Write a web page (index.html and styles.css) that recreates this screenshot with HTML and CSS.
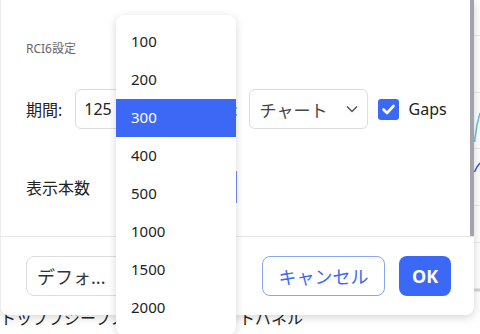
FILE: index.html
```html
<!DOCTYPE html>
<html lang="ja">
<head>
  <meta charset="UTF-8">
  <meta name="viewport" content="width=device-width, initial-scale=1.0">
  <title>RCI6設定</title>
  <link rel="stylesheet" href="styles.css">
</head>
<body>
  <div class="page">
    <svg class="chart" width="6" height="334" viewBox="474 0 6 334">
      <line x1="474" y1="35.5" x2="480" y2="35.5" stroke="#ececec"/>
      <line x1="474" y1="92.5" x2="480" y2="92.5" stroke="#ececec"/>
      <line x1="474" y1="148.5" x2="480" y2="148.5" stroke="#ececec"/>
      <line x1="474" y1="205.5" x2="480" y2="205.5" stroke="#ececec"/>
      <line x1="474" y1="242.5" x2="480" y2="242.5" stroke="#ececec"/>
      <line x1="474" y1="290" x2="480" y2="290" stroke="#d4d4d8" stroke-width="3"/>
      <polyline points="474.5,142 477,125 480,113" fill="none" stroke="#5cc6d6" stroke-width="1.5"/>
      <polyline points="474.5,172 477,167 480,163" fill="none" stroke="#2f5ff0" stroke-width="1.5"/>
    </svg>
    <p class="page-text"><span>トップブジーブス</span><span class="page-text-end">トパネル</span></p>
  </div>

  <div class="dialog">
    <div class="dialog-body">
      <div class="content">
        <div class="section-title">RCI6設定</div>
        <div class="row">
          <span class="label">期間:</span>
          <div class="field field-period">125</div>
          <span class="label label-type">種類:</span>
          <div class="field field-select">
            <span>チャート</span>
            <svg width="12" height="8" viewBox="0 0 12 8"><polyline points="1,1.5 6,6.5 11,1.5" fill="none" stroke="#555" stroke-width="1.5"/></svg>
          </div>
          <span class="checkbox">
            <svg width="21" height="21" viewBox="0 0 21 21"><polyline points="5.5,10.5 9,14 15.5,7" fill="none" stroke="#fff" stroke-width="2.6" stroke-linecap="round" stroke-linejoin="round"/></svg>
          </span>
          <span class="check-label">Gaps</span>
        </div>
        <div class="row row-count">
          <span class="label">表示本数</span>
          <div class="count-box"></div>
        </div>
      </div>
      <div class="scrollbar"></div>
    </div>
    <div class="dialog-footer">
      <button class="btn btn-default">デフォ...</button>
      <span class="spacer"></span>
      <button class="btn btn-cancel">キャンセル</button>
      <button class="btn btn-ok">OK</button>
    </div>
  </div>

  <ul class="dropdown">
    <li>100</li>
    <li>200</li>
    <li class="selected">300</li>
    <li>400</li>
    <li>500</li>
    <li>1000</li>
    <li>1500</li>
    <li>2000</li>
  </ul>
</body>
</html>
```

FILE: styles.css
```css
body {
  margin: 0;
  width: 480px;
  height: 334px;
  overflow: hidden;
  position: relative;
  background: #fff;
  font-family: "Noto Sans", "Noto Sans CJK JP", sans-serif;
  color: #222;
}
.page {
  padding-top: 308px;
}
.chart {
  position: absolute;
  left: 474px;
  top: 0;
}
.page-text {
  margin: 0;
  font-size: 16px;
  line-height: 20px;
  white-space: nowrap;
  color: #222;
}
.page-text-end {
  margin-left: 112px;
}

.dialog {
  position: absolute;
  left: 0;
  top: 0;
  width: 474px;
  height: 315px;
  display: flex;
  flex-direction: column;
  background: #fff;
  border-radius: 0 0 8px 8px;
  box-shadow: 0 2px 10px rgba(0,0,0,0.18);
  border-left: 1px solid #ececec;
  box-sizing: border-box;
}
.dialog-body {
  height: 236px;
  display: flex;
}
.content {
  flex: 1;
  padding: 41px 0 0 25px;
}
.scrollbar {
  width: 4px;
  background: #a3a3ab;
}
.section-title {
  font-size: 12px;
  line-height: 16px;
  color: #666;
}
.row {
  display: flex;
  align-items: center;
  height: 40px;
  margin-top: 32px;
}
.row-count {
  height: 32px;
  margin-top: 42px;
}
.label {
  font-size: 16px;
  white-space: nowrap;
}
.field {
  height: 40px;
  box-sizing: border-box;
  border: 1px solid #dcdcdc;
  border-radius: 6px;
  display: flex;
  align-items: center;
  font-size: 16px;
}
.field-period {
  width: 114px;
  margin-left: 13px;
  padding-left: 8px;
}
.label-type {
  margin-left: 12px;
}
.field-select {
  width: 119px;
  margin-left: 11px;
  padding: 0 9px 0 10px;
  justify-content: space-between;
  color: #444;
  font-size: 17px;
}
.checkbox {
  width: 21px;
  height: 21px;
  margin-left: 10px;
  background: #3b68f6;
  border-radius: 3px;
  display: flex;
}
.check-label {
  margin-left: 10px;
  font-size: 16px;
}
.count-box {
  width: 89px;
  height: 32px;
  margin-left: 58px;
  box-sizing: border-box;
  border: 2px solid #6f8ff6;
}

.dialog-footer {
  flex: 1;
  display: flex;
  align-items: center;
  padding: 0 23px 0 25px;
  border-top: 1px solid #e6e6e6;
}
.spacer {
  flex: 1;
}
.btn {
  height: 40px;
  border-radius: 8px;
  font-family: inherit;
  font-size: 18px;
  background: #fff;
  padding: 0;
  cursor: pointer;
}
.btn-default {
  width: 104px;
  border: 1px solid #dcdcdc;
  color: #333;
  text-align: left;
  padding-left: 10px;
}
.btn-cancel {
  width: 123px;
  border: 1px solid #86a4f8;
  color: #3d6af5;
}
.btn-ok {
  width: 52px;
  margin-left: 14px;
  border: none;
  background: #3b68f6;
  color: #fff;
  font-weight: bold;
}

.dropdown {
  position: absolute;
  left: 116px;
  top: 15px;
  width: 120px;
  margin: 0;
  padding: 8px 0;
  list-style: none;
  background: #fff;
  border-radius: 8px;
  box-shadow: 0 2px 8px rgba(0,0,0,0.16);
}
.dropdown li {
  height: 38px;
  line-height: 37px;
  padding-left: 15px;
  font-size: 15px;
  color: #222;
}
.dropdown li.selected {
  background: #3d68f5;
  color: #fff;
}
```
